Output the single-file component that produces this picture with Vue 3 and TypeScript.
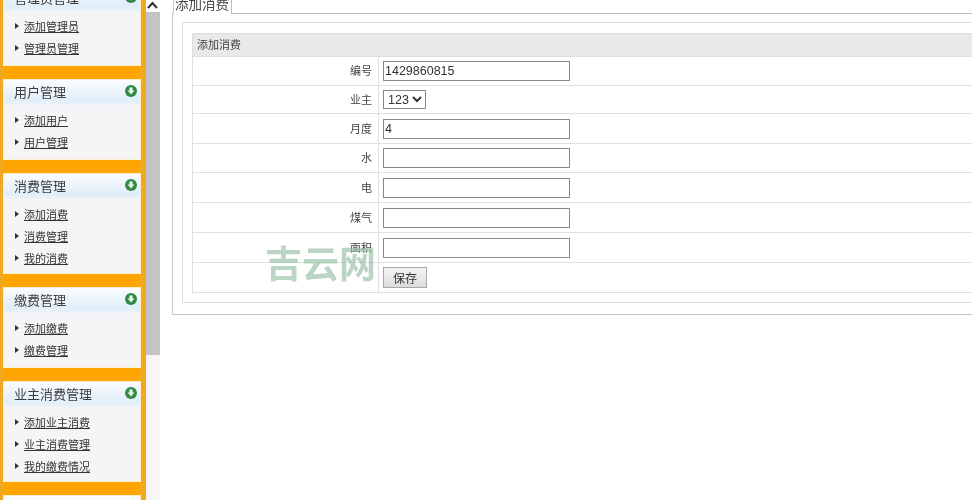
<template>
  <div class="page">
    <!-- 左侧菜单 -->
    <aside class="sidebar">
      <section
        v-for="menu in menus"
        :key="menu.title"
        class="panel"
        :class="{ 'panel-long': menu.items.length > 2 }"
      >
        <header class="panel-head">
          <span>{{ menu.title }}</span>
          <svg v-if="menu.title" class="panel-icon" viewBox="0 0 12 12">
            <circle cx="6" cy="6" r="6" fill="#2f8a46" />
            <path d="M4.4 2.4h3.2v3.2h1.9L6 9.6 2.5 5.6h1.9z" fill="#e8f5e6" />
          </svg>
        </header>
        <ul class="panel-list">
          <li v-for="item in menu.items" :key="item">
            <i class="bullet"></i>
            <a>{{ item }}</a>
          </li>
        </ul>
      </section>
    </aside>

    <!-- 滚动条 -->
    <div class="scrollbar">
      <div class="scroll-up">
        <svg viewBox="0 0 13 12" width="13" height="12">
          <path d="M2 8l4.5-5L11 8" fill="none" stroke="#333" stroke-width="2" />
        </svg>
      </div>
      <div class="scroll-thumb"></div>
      <div class="scroll-track"></div>
    </div>

    <main class="main">
      <div class="tabs">
        <span class="tab">添加消费</span>
      </div>
      <div class="box">
        <div class="box-inner">
          <table class="form">
            <colgroup>
              <col class="col-label" />
              <col />
            </colgroup>
            <thead>
              <tr>
                <th colspan="2">添加消费</th>
              </tr>
            </thead>
            <tbody>
              <tr v-for="row in rows" :key="row.label" :style="{ height: row.height + 'px' }">
                <td class="label">{{ row.label }}</td>
                <td class="field">
                  <select v-if="row.label === '业主'" class="select">
                    <option>123</option>
                  </select>
                  <input v-else class="input" type="text" :value="row.value" />
                </td>
              </tr>
              <tr class="row-save">
                <td class="label"></td>
                <td class="field"><button class="save">保存</button></td>
              </tr>
            </tbody>
          </table>
        </div>
      </div>
    </main>

    <div class="watermark">吉云网</div>
  </div>
</template>

<script setup lang="ts">
interface Menu {
  title: string;
  items: string[];
}

const menus: Menu[] = [
  { title: "管理员管理", items: ["添加管理员", "管理员管理"] },
  { title: "用户管理", items: ["添加用户", "用户管理"] },
  { title: "消费管理", items: ["添加消费", "消费管理", "我的消费"] },
  { title: "缴费管理", items: ["添加缴费", "缴费管理"] },
  { title: "业主消费管理", items: ["添加业主消费", "业主消费管理", "我的缴费情况"] },
  { title: "", items: [] },
];

const rows = [
  { label: "编号", value: "1429860815", height: 29 },
  { label: "业主", value: "", height: 28 },
  { label: "月度", value: "4", height: 30 },
  { label: "水", value: "", height: 29 },
  { label: "电", value: "", height: 30 },
  { label: "煤气", value: "", height: 30 },
  { label: "面积", value: "", height: 30 },
];
</script>

<style>
html,
body {
  margin: 0;
  background: #fff;
  overflow: hidden;
}
</style>

<style scoped>
.page {
  position: relative;
  display: flex;
  width: 972px;
  height: 500px;
  overflow: hidden;
  font-family: "Liberation Sans", "Noto Sans CJK SC", sans-serif;
  color: #333;
  background: #fff;
  filter: blur(0.3px);
}

.sidebar {
  flex: none;
  box-sizing: border-box;
  width: 146px;
  height: 530px;
  margin-top: -15px;
  padding: 0 5px 0 3px;
  background: linear-gradient(to right, #f0a920 3px, #fea500 3px, #fea500 140px, #f0a920 140px);
}

.panel {
  box-sizing: border-box;
  height: 81px;
  margin-bottom: 13px;
  border: 1px solid #fcefca;
  background: #f5f5f7;
}

.panel-long {
  height: 101px;
}

.panel-head {
  display: flex;
  align-items: center;
  justify-content: space-between;
  box-sizing: border-box;
  height: 25px;
  padding: 0 3px 2px 10px;
  font-size: 13px;
  color: #3c3c3c;
  background: linear-gradient(#fbfcfe, #e0eef9 80%, #eaf2f9);
}

.panel-icon {
  width: 12px;
  height: 12px;
  margin-bottom: 2px;
}

.panel-list {
  margin: 0;
  padding: 4px 0 0 11px;
  list-style: none;
}

.panel-list li {
  display: flex;
  align-items: center;
  height: 22px;
  font-size: 11px;
  color: #333;
}

.panel-list a {
  text-decoration: underline;
}

.bullet {
  width: 0;
  height: 0;
  margin-right: 5px;
  border-top: 3px solid transparent;
  border-bottom: 3px solid transparent;
  border-left: 4px solid #333;
}

.scrollbar {
  flex: none;
  display: flex;
  flex-direction: column;
  width: 14px;
}

.scroll-up {
  height: 12px;
  background: #fff;
}

.scroll-up svg {
  display: block;
}

.scroll-thumb {
  height: 343px;
  background: #c4c4c4;
}

.scroll-track {
  flex: 1;
  background: #f8f5f8;
}

.main {
  flex: none;
  width: 900px;
  padding-left: 12px;
}

.tabs {
  display: flex;
  box-sizing: border-box;
  height: 14px;
  padding-left: 1px;
  border-bottom: 1px solid #bdbdbd;
}

.tab {
  box-sizing: border-box;
  width: 59px;
  height: 14px;
  padding-left: 1px;
  border-right: 1px solid #bdbdbd;
  border-left: 1px solid #ccc;
  background: #fff;
  font-size: 13.5px;
  line-height: 9px;
  white-space: nowrap;
  color: #444;
}

.box {
  box-sizing: border-box;
  height: 301px;
  padding: 8px 9px 10px;
  border-left: 1px solid #c8c8c8;
  border-bottom: 1px solid #c4c4c4;
}

.box-inner {
  box-sizing: border-box;
  height: 281px;
  padding: 10px 9px 9px;
  border: 1px solid #d3e3d3;
  border-right: 0;
}

.form {
  width: 100%;
  border-collapse: collapse;
  table-layout: fixed;
  font-size: 11px;
  color: #444;
}

.col-label {
  width: 186px;
}

.form th {
  box-sizing: border-box;
  height: 23px;
  padding: 0 0 0 4px;
  border: 1px solid #dedede;
  background: #e9e8ea;
  font-weight: normal;
  text-align: left;
  line-height: 21px;
}

.form td {
  box-sizing: border-box;
  padding: 0;
  border: 1px solid #e0e0e0;
}

.form .label {
  padding: 0 6px 2px 0;
  text-align: right;
}

.form .field {
  padding-left: 4px;
}

.row-save {
  height: 30px;
}

.input {
  display: block;
  box-sizing: border-box;
  width: 187px;
  height: 20px;
  padding: 0 1px;
  border: 1px solid #8a8a8a;
  border-radius: 0;
  outline: none;
  background: #fff;
  font: 12.5px "Liberation Sans", sans-serif;
  color: #333;
}

.select {
  display: block;
  box-sizing: border-box;
  width: 43px;
  height: 19px;
  padding: 0;
  border: 1px solid #8a8a8a;
  border-radius: 0;
  background: #fff;
  font: 12.5px "Liberation Sans", sans-serif;
  color: #333;
}

.save {
  display: block;
  box-sizing: border-box;
  width: 44px;
  height: 21px;
  padding: 0;
  border: 1px solid #a8a8a8;
  border-radius: 0;
  background: linear-gradient(#f4f4f4, #dcdcdc);
  font: 12px "Liberation Sans", "Noto Sans CJK SC", sans-serif;
  color: #333;
}

.watermark {
  position: absolute;
  top: 241px;
  left: 265px;
  font-family: "Noto Sans CJK SC", sans-serif;
  font-size: 37px;
  font-weight: 700;
  line-height: 42px;
  color: rgba(150, 190, 165, 0.65);
  pointer-events: none;
}
</style>
